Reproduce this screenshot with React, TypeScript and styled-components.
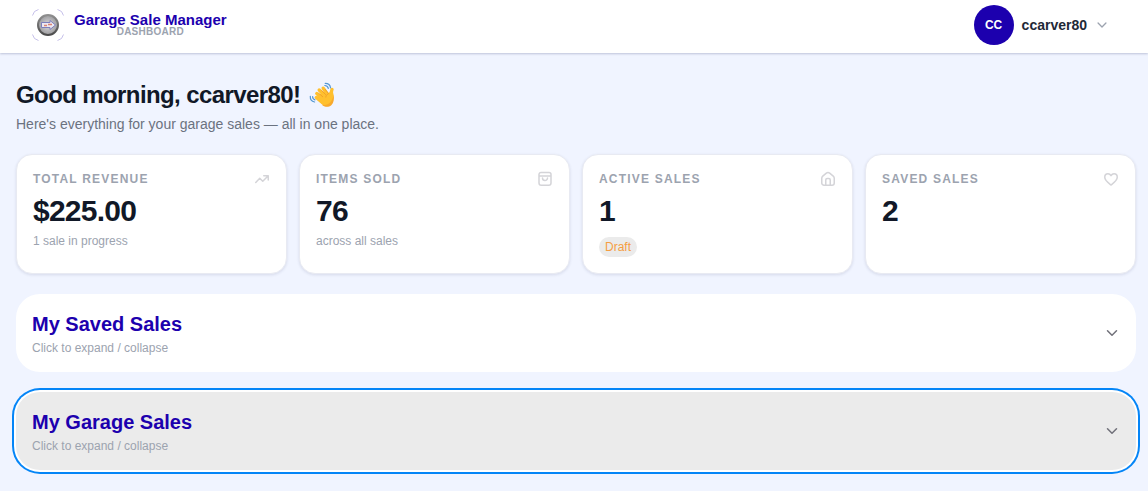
import React, { useState } from "react";
import styled, { createGlobalStyle } from "styled-components";

const GlobalStyle = createGlobalStyle`
  *, *::before, *::after { box-sizing: border-box; }
  body {
    margin: 0;
    background: #f0f4ff;
    color: #111827;
    font-family: "Liberation Sans", Arial, sans-serif;
    font-size: 14px;
    line-height: 20px;
  }
  h1, h2, p { margin: 0; }
  button { font: inherit; color: inherit; border: 0; background: none; cursor: pointer; text-align: left; }
`;

const Header = styled.header`
  display: flex;
  align-items: center;
  justify-content: space-between;
  padding: 5px 39px 8px 32px;
  background: #fff;
  box-shadow: 0 1px 2px rgba(30, 41, 90, 0.24);
`;

const Brand = styled.a`
  display: flex;
  align-items: center;
  gap: 10px;
  color: inherit;
  text-decoration: none;
`;

const BrandText = styled.span`
  display: flex;
  flex-direction: column;
  align-items: center;
  padding-top: 2px;
`;

const BrandName = styled.span`
  color: #1c00ae;
  font-size: 15px;
  font-weight: 700;
  line-height: 12px;
`;

const BrandTag = styled.span`
  color: #9ca3af;
  font-size: 10px;
  font-weight: 700;
  line-height: 12px;
  letter-spacing: 0.025em;
`;

const UserButton = styled.button`
  display: flex;
  align-items: center;
  gap: 8px;
  padding: 0;
  color: #9ca3af;
`;

const Avatar = styled.span`
  display: grid;
  place-items: center;
  width: 40px;
  height: 40px;
  border-radius: 50%;
  background: #1c00ae;
  color: #fff;
  font-size: 12px;
  font-weight: 700;
`;

const UserName = styled.span`
  color: #1f2937;
  font-size: 14px;
  font-weight: 700;
`;

const Main = styled.main`
  display: flex;
  flex-direction: column;
  gap: 20px;
  padding: 26px 12px 20px 16px;
`;

const Greeting = styled.h1`
  display: flex;
  align-items: center;
  gap: 8px;
  font-size: 24px;
  font-weight: 700;
  line-height: 32px;
  letter-spacing: -0.025em;
`;

const Lead = styled.p`
  margin-top: 3px;
  color: #6b7280;
`;

const Stats = styled.div`
  display: grid;
  grid-template-columns: repeat(4, 1fr);
  gap: 12px;
`;

const StatCard = styled.section`
  min-height: 120px;
  padding: 16px;
  border: 1px solid #e8eaf2;
  border-radius: 16px;
  background: #fff;
  box-shadow: 0 1px 3px rgba(30, 41, 90, 0.12);
`;

const StatTop = styled.div`
  display: flex;
  align-items: center;
  justify-content: space-between;
  color: #d4d4d8;
`;

const StatLabel = styled.h2`
  color: #9ca3af;
  font-size: 12px;
  font-weight: 700;
  line-height: 16px;
  letter-spacing: 0.1em;
  text-transform: uppercase;
`;

const StatValue = styled.p`
  margin-top: 6px;
  font-size: 30px;
  font-weight: 700;
  line-height: 36px;
  letter-spacing: -0.025em;
`;

const StatNote = styled.p`
  margin-top: 4px;
  color: #9ca3af;
  font-size: 12px;
  line-height: 16px;
`;

const Badge = styled.span`
  display: inline-block;
  margin-top: 8px;
  padding: 0 6px;
  border-radius: 10px;
  background: #ebebeb;
  color: #f59e42;
  font-size: 12px;
  line-height: 20px;
`;

const Panel = styled.button<{ $focused: boolean }>`
  display: flex;
  align-items: center;
  justify-content: space-between;
  width: 100%;
  padding: 16px;
  border-radius: 24px;
  outline: none;
  color: #71717a;
  background: ${(p) => (p.$focused ? "#ebebeb" : "#fff")};
  box-shadow: ${(p) => (p.$focused ? "0 0 0 2px #fff, 0 0 0 4px #0485f7" : "none")};
`;

const PanelTitle = styled.span`
  display: block;
  color: #1c00ae;
  font-size: 20px;
  font-weight: 700;
  line-height: 28px;
`;

const PanelHint = styled.span`
  display: block;
  margin-top: 2px;
  color: #9ca3af;
  font-size: 12px;
  line-height: 16px;
`;

const paths = {
  chevron: "M3.5 5.750L8 10.250l4.500-4.500",
  trend: "M1.750 11.500L5.750 7.250l3 3L14 5M9.750 4.750h4.500V9",
  bag: "M2 5h12M4 1.500h8a2 2 0 0 1 2 2v8.500a2.250 2.250 0 0 1-2.250 2.250h-7.500A2.250 2.250 0 0 1 2 12V3.500a2 2 0 0 1 2-2zM5.500 7a2.500 2.500 0 0 0 5 0",
  house:
    "M1.750 7.200c0-.8.4-1.500 1-2l3.600-3a2.600 2.600 0 0 1 3.300 0l3.600 3c.6.5 1 1.200 1 2V12A2.250 2.250 0 0 1 12 14.250H4A2.250 2.250 0 0 1 1.750 12zM5.750 14V9a1.500 1.500 0 0 1 1.500-1.500h1.500a1.500 1.500 0 0 1 1.500 1.500v5",
  heart:
    "M8 14C5.500 12 1.750 9.500 1.750 6.200 1.750 4.200 3.200 2.750 5 2.750c1.300 0 2.300.7 3 1.900.7-1.200 1.700-1.900 3-1.900 1.800 0 3.250 1.450 3.250 3.450C14.250 9.500 10.500 12 8 14z",
};

function Glyph({ name, size = 16 }: { name: keyof typeof paths; size?: number }) {
  return (
    <svg width={size} height={size} viewBox="0 0 16 16" fill="none" aria-hidden="true">
      <path d={paths[name]} stroke="currentColor" strokeWidth="1.500" strokeLinecap="round" strokeLinejoin="round" />
    </svg>
  );
}

function Logo() {
  return (
    <svg width="32" height="32" viewBox="0 0 32 32" fill="none" aria-hidden="true">
      <defs>
        <linearGradient id="rim" x1="0" y1="0" x2="0" y2="1">
          <stop offset="0" stopColor="#8f8f8f" />
          <stop offset="1" stopColor="#4b4b4b" />
        </linearGradient>
        <radialGradient id="face">
          <stop offset="0" stopColor="#dcdadf" />
          <stop offset="1" stopColor="#9a9a9c" />
        </radialGradient>
      </defs>
      <path
        d="M.5 6.500Q1.500 1.500 6.500 .5M25.500 .5Q30.500 1.500 31.500 6.500M31.500 25.500Q30.500 30.500 25.500 31.500M6.500 31.500Q1.500 30.500 .5 25.500"
        stroke="#c5bfe9"
      />
      <circle cx="16" cy="16" r="10" fill="url(#face)" stroke="url(#rim)" strokeWidth="2" />
      <path d="M9.500 13.500h8.500v-2l5.500 4.500-5.500 4.500v-2H9.500z" fill="#ece9f2" stroke="#7c7fbd" />
      <path d="M12 16.500h3M16 15.500h4" stroke="#dc8373" strokeWidth="1.600" />
    </svg>
  );
}

function WavingHand() {
  return (
    <svg width="28" height="28" viewBox="0 0 28 28" fill="none" aria-hidden="true">
      <g stroke="#ffc02e" strokeWidth="3.400" strokeLinecap="round">
        <path d="M8.300 16.500l6 5M8.800 12.500l7 6M11.200 9l7 7M15.200 7.200l5 7" />
        <path d="M24 8.500c-1.200 2-.6 4-.2 7" />
      </g>
      <path d="M9 17l5-6 6 1 4.500-2c1.400 4 1.600 9-.7 12.500-2.500 3.500-7 3.700-10 .5z" fill="#ffc02e" />
      <path d="M25.600 13.500c.7 4.500.2 8.300-2.300 10.700-3 2.600-7 2-9.800-.8 5.500 1.800 11-1.400 12.100-9.900z" fill="#f8a92d" />
      <path d="M10.500 12l4.500 4M13.500 9.300l4.300 4.500M17 8l3.500 4.700c-1.800.8-2.700 2-2.700 3.800" stroke="#e9942a" strokeWidth=".7" />
      <g stroke="#5497d3" strokeWidth="1.200" strokeLinecap="round">
        <path d="M17.200 2.300c3 0 5 1.600 5.300 4.500M16.800 4.500c2 .1 3.200 1 3.500 2.800M2.300 15.300c-.2 3.200 1.400 5.200 4.300 5.700M4.600 15.500c0 1.800.8 2.900 2.400 3.300" />
      </g>
    </svg>
  );
}

type Stat = { label: string; value: string; icon: keyof typeof paths; note?: string; badge?: string };

const stats: Stat[] = [
  { label: "Total Revenue", value: "$225.00", note: "1 sale in progress", icon: "trend" },
  { label: "Items Sold", value: "76", note: "across all sales", icon: "bag" },
  { label: "Active Sales", value: "1", badge: "Draft", icon: "house" },
  { label: "Saved Sales", value: "2", icon: "heart" },
];

const panels = ["My Saved Sales", "My Garage Sales"];

export default function App() {
  const [focused, setFocused] = useState(panels[1]);

  return (
    <>
      <GlobalStyle />
      <Header>
        <Brand href="#">
          <Logo />
          <BrandText>
            <BrandName>Garage Sale Manager</BrandName>
            <BrandTag>DASHBOARD</BrandTag>
          </BrandText>
        </Brand>
        <UserButton type="button" aria-haspopup="menu">
          <Avatar>CC</Avatar>
          <UserName>ccarver80</UserName>
          <Glyph name="chevron" size={14} />
        </UserButton>
      </Header>
      <Main>
        <div>
          <Greeting>
            Good morning, ccarver80!
            <WavingHand />
          </Greeting>
          <Lead>Here's everything for your garage sales — all in one place.</Lead>
        </div>
        <Stats>
          {stats.map(({ label, value, note, badge, icon }) => (
            <StatCard key={label}>
              <StatTop>
                <StatLabel>{label}</StatLabel>
                <Glyph name={icon} />
              </StatTop>
              <StatValue>{value}</StatValue>
              {note && <StatNote>{note}</StatNote>}
              {badge && <Badge>{badge}</Badge>}
            </StatCard>
          ))}
        </Stats>
        {panels.map((title) => (
          <Panel
            key={title}
            type="button"
            aria-expanded={false}
            $focused={focused === title}
            onFocus={() => setFocused(title)}
          >
            <span>
              <PanelTitle>{title}</PanelTitle>
              <PanelHint>Click to expand / collapse</PanelHint>
            </span>
            <Glyph name="chevron" />
          </Panel>
        ))}
      </Main>
    </>
  );
}
